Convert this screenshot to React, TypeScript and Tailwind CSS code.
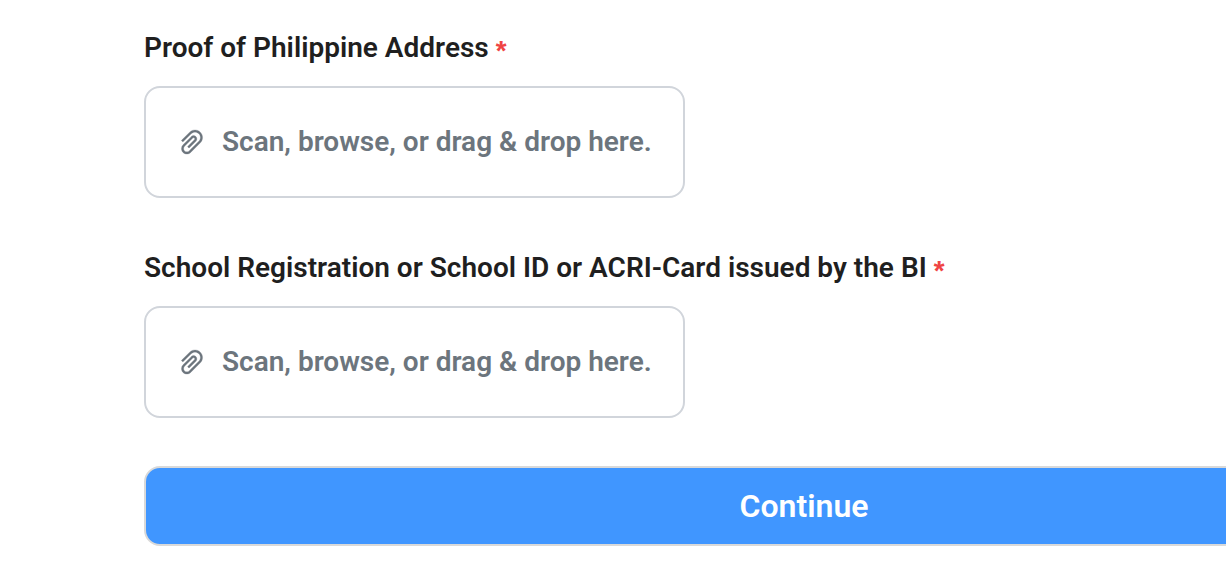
import { useId } from "react";
import { AiOutlinePaperClip } from "react-icons/ai";

function UploadField({ label }: { label: string }) {
  const id = useId();
  return (
    <div className="flex flex-col items-start">
      <label htmlFor={id} className="flex items-start gap-1 text-[28px] leading-8 font-semibold text-[#1f1f1f]">
        <span>{label}</span>
        <span className="-mb-1.5 pt-1.5 font-['Liberation_Mono',monospace] font-bold text-[#ef4444]">*</span>
      </label>
      <label
        htmlFor={id}
        className="mt-[22px] flex h-28 w-[541px] max-w-full cursor-pointer items-center gap-[14px] rounded-2xl border-2 border-[#d1d5db] bg-white px-[30px] text-[28px] leading-8 font-semibold text-[#6c757d]"
      >
        <AiOutlinePaperClip className="size-8 shrink-0 stroke-current stroke-[8]" aria-hidden="true" />
        <span className="whitespace-nowrap">Scan, browse, or drag &amp; drop here.</span>
        <input id={id} type="file" className="sr-only" />
      </label>
    </div>
  );
}

export default function App() {
  return (
    <main className="overflow-x-hidden bg-white pt-8 pb-7 pl-36 font-['Roboto',sans-serif]">
      <form className="flex flex-col" onSubmit={(e) => e.preventDefault()}>
        <div className="flex flex-col gap-[54px]">
          <UploadField label="Proof of Philippine Address" />
          <UploadField label="School Registration or School ID or ACRI-Card issued by the BI" />
        </div>
        <button
          type="submit"
          className="mt-12 -mr-[238px] h-20 rounded-2xl border-2 border-[#d9d9d9] bg-[#4096ff] text-[32px] leading-10 font-semibold text-white"
        >
          Continue
        </button>
      </form>
    </main>
  );
}
